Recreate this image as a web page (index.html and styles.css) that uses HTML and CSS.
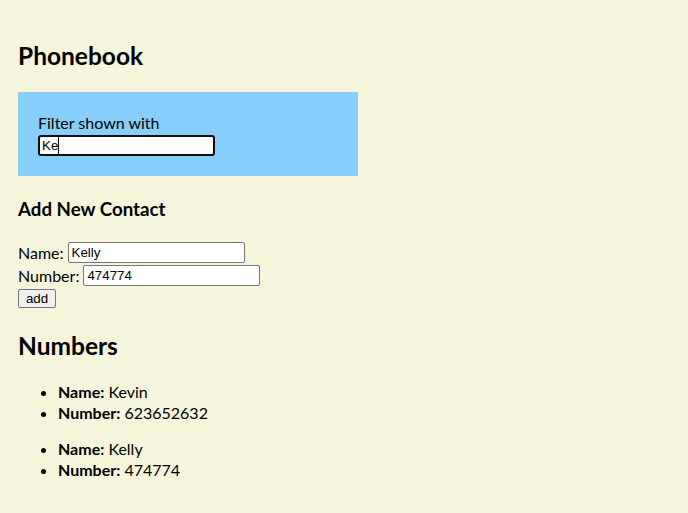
FILE: index.html
```html
<!DOCTYPE html>
<html>
<head>
<meta charset="utf-8">
<title>Phonebook</title>
<link rel="stylesheet" href="styles.css">
</head>
<body>
<div class="app">
  <h2 class="title">Phonebook</h2>
  <div class="filter">
    <div class="filter-label">Filter shown with</div>
    <div class="filter-field">
      <input class="input input-focused" type="text" value="Ke">
      <span class="caret"></span>
    </div>
  </div>
  <h3 class="subtitle">Add New Contact</h3>
  <form class="form">
    <div class="form-row"><span>Name:</span><input class="input" type="text" value="Kelly"></div>
    <div class="form-row"><span>Number:</span><input class="input" type="text" value="474774"></div>
    <div class="form-row"><button class="btn" type="button">add</button></div>
  </form>
  <h2 class="title">Numbers</h2>
  <ul class="contact">
    <li><b>Name:</b> Kevin</li>
    <li><b>Number:</b> 623652632</li>
  </ul>
  <ul class="contact">
    <li><b>Name:</b> Kelly</li>
    <li><b>Number:</b> 474774</li>
  </ul>
</div>
</body>
</html>
```

FILE: styles.css
```css
html, body {
  background: #f5f5dc;
}
body {
  margin: 8px;
  font-family: Lato, "Noto Sans", sans-serif;
  font-size: 16px;
  line-height: 21.3px;
  color: #000;
}
.app {
  padding: 0 10px;
}
.title {
  font-size: 24.5px;
  line-height: 32px;
  font-weight: 700;
  margin: 20px 0;
}
.app > .title:first-child {
  margin-top: 32px;
}
.filter {
  width: 300px;
  padding: 20px;
  background: #87cefa;
  margin-top: 19px;
}
.filter-label {
  line-height: 21.3px;
}
.filter-field {
  position: relative;
  margin-top: 1.7px;
  height: 21px;
}
.input {
  box-sizing: border-box;
  width: 177px;
  height: 21px;
  margin: 0;
  padding: 1px 3px;
  border: 1px solid #767676;
  border-radius: 2px;
  background: #fff;
  font-family: "Liberation Sans", Arial, sans-serif;
  font-size: 13.33px;
  color: #000;
  outline: none;
}
.input-focused {
  display: block;
  border: 2px solid #101010;
  border-radius: 3px;
  padding: 0 2px;
}
.caret {
  position: absolute;
  left: 20px;
  top: 2px;
  width: 1px;
  height: 17px;
  background: #000;
}
.subtitle {
  font-size: 18.72px;
  line-height: 25px;
  font-weight: 700;
  margin: 21.5px 0 18.72px;
}
.form {
  margin: 0;
}
.form-row {
  display: flex;
  align-items: center;
  gap: 4px;
  height: 23px;
}
.btn {
  box-sizing: border-box;
  height: 19px;
  width: 38px;
  padding: 0 6px;
  margin: 0;
  border: 1px solid #767676;
  border-radius: 2px;
  background: #efefef;
  font-family: "Liberation Sans", Arial, sans-serif;
  font-size: 13.33px;
  color: #000;
}
.title + .contact {
  margin-top: 15px;
}
.contact {
  margin: 16px 0;
  padding-left: 40px;
}
.contact + .contact {
  margin-top: 16px;
}
.contact li {
  line-height: 20.5px;
}
.contact b {
  font-weight: 700;
}
```
